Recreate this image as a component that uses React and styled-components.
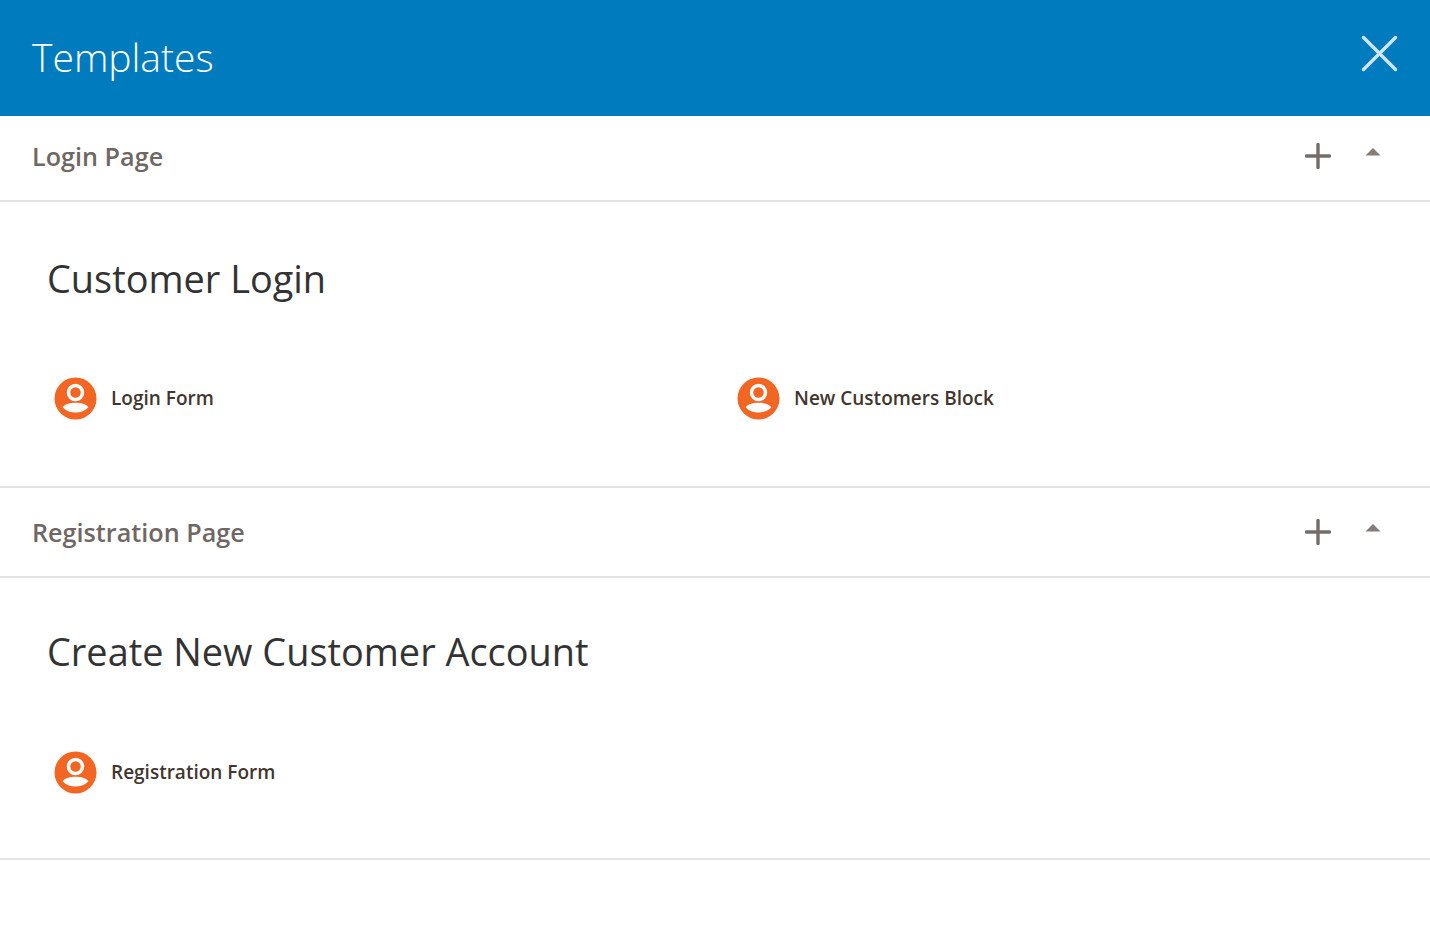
import React from "react";
import styled, { createGlobalStyle } from "styled-components";

const Global = createGlobalStyle`
  html, body { margin: 0; padding: 0; background: #fff; }
  body { font-family: "Open Sans", "Liberation Sans", sans-serif; }
`;

const Page = styled.div`
  width: 1430px;
  height: 950px;
  overflow: hidden;
  background: #fff;
`;

const Header = styled.header`
  height: 116px;
  background: #007bbd;
  display: flex;
  justify-content: space-between;
  align-items: flex-start;
  padding: 0 32px;
`;

const Title = styled.h1`
  margin: 31px 0 0;
  font-size: 39px;
  line-height: 52px;
  font-weight: 300;
  color: #fff;
`;

const Close = styled.svg`
  margin: 35px 0 0 0;
  width: 38px;
  height: 38px;
  display: block;
`;

const SectionBar = styled.div`
  height: ${(p) => p.$h}px;
  box-sizing: border-box;
  border-bottom: 2px solid #e3e3e3;
  display: flex;
  align-items: flex-start;
  justify-content: space-between;
  padding: ${(p) => p.$top}px 0 0 32px;
`;

const SectionName = styled.div`
  line-height: 36px;
  font-weight: 600;
  color: #6f6764;
  font-size: 25.2px;
`;

const Tools = styled.div`
  display: flex;
  align-items: flex-start;
  gap: 34px;
  padding: 5px 49px 0 0;
`;

const Plus = styled.svg`
  width: 26px;
  height: 26px;
  display: block;
`;

const Caret = styled.svg`
  width: 16px;
  height: 10px;
  display: block;
  margin-top: 4px;
`;

const Body = styled.section`
  height: ${(p) => p.$h}px;
  box-sizing: border-box;
  border-bottom: 2px solid #e3e3e3;
  padding: ${(p) => p.$top}px 0 0 47px;
`;

const Heading = styled.h2`
  margin: 0;
  font-size: 37.9px;
  line-height: 50px;
  font-weight: 400;
  color: #333;
`;

const Items = styled.div`
  display: grid;
  grid-template-columns: 683px 1fr;
  margin: ${(p) => p.$gap}px 0 0 7px;
`;

const Item = styled.div`
  display: flex;
  align-items: center;
  gap: 14px;
  height: 44px;
`;

const Label = styled.span`
  font-size: 19px;
  line-height: 28px;
  font-weight: 600;
  color: #41362f;
`;

const Avatar = () => (
  <svg width="43" height="43" viewBox="0 0 43 43" style={{ display: "block" }}>
    <circle cx="21.5" cy="21.5" r="21" fill="#f36523" />
    <circle cx="21.5" cy="15.5" r="7" fill="none" stroke="#fff" strokeWidth="3.5" />
    <path d="M8.5 30.2c3.2-3.4 7.6-4.4 13-4.4s9.8 1 13 4.4c-3.2 3.6-7.6 5.2-13 5.2s-9.8-1.6-13-5.2z" fill="#fff" />
  </svg>
);

const Toolset = () => (
  <Tools>
    <Plus viewBox="0 0 26 26">
      <path d="M13 1.5v23M1.5 13h23" stroke="#746d69" strokeWidth="3.4" strokeLinecap="round" fill="none" />
    </Plus>
    <Caret viewBox="0 0 16 10">
      <path d="M8 1l7.5 7.5H.5z" fill="#857c77" />
    </Caret>
  </Tools>
);

export default function App() {
  return (
    <Page>
      <Global />
      <Header>
        <Title>Templates</Title>
        <Close viewBox="0 0 38 38">
          <path d="M3.5 2.5l32 32M35.5 2.5l-32 32" stroke="#cfe5f2" strokeWidth="3.4" strokeLinecap="round" fill="none" />
        </Close>
      </Header>
      <SectionBar $h={86} $top={22}>
        <SectionName>Login Page</SectionName>
        <Toolset />
      </SectionBar>
      <Body $h={286} $top={51}>
        <Heading>Customer Login</Heading>
        <Items $gap={73}>
          <Item><Avatar /><Label>Login Form</Label></Item>
          <Item><Avatar /><Label>New Customers Block</Label></Item>
        </Items>
      </Body>
      <SectionBar $h={90} $top={26}>
        <SectionName>Registration Page</SectionName>
        <Toolset />
      </SectionBar>
      <Body $h={282} $top={48}>
        <Heading>Create New Customer Account</Heading>
        <Items $gap={74}>
          <Item><Avatar /><Label>Registration Form</Label></Item>
        </Items>
      </Body>
    </Page>
  );
}
